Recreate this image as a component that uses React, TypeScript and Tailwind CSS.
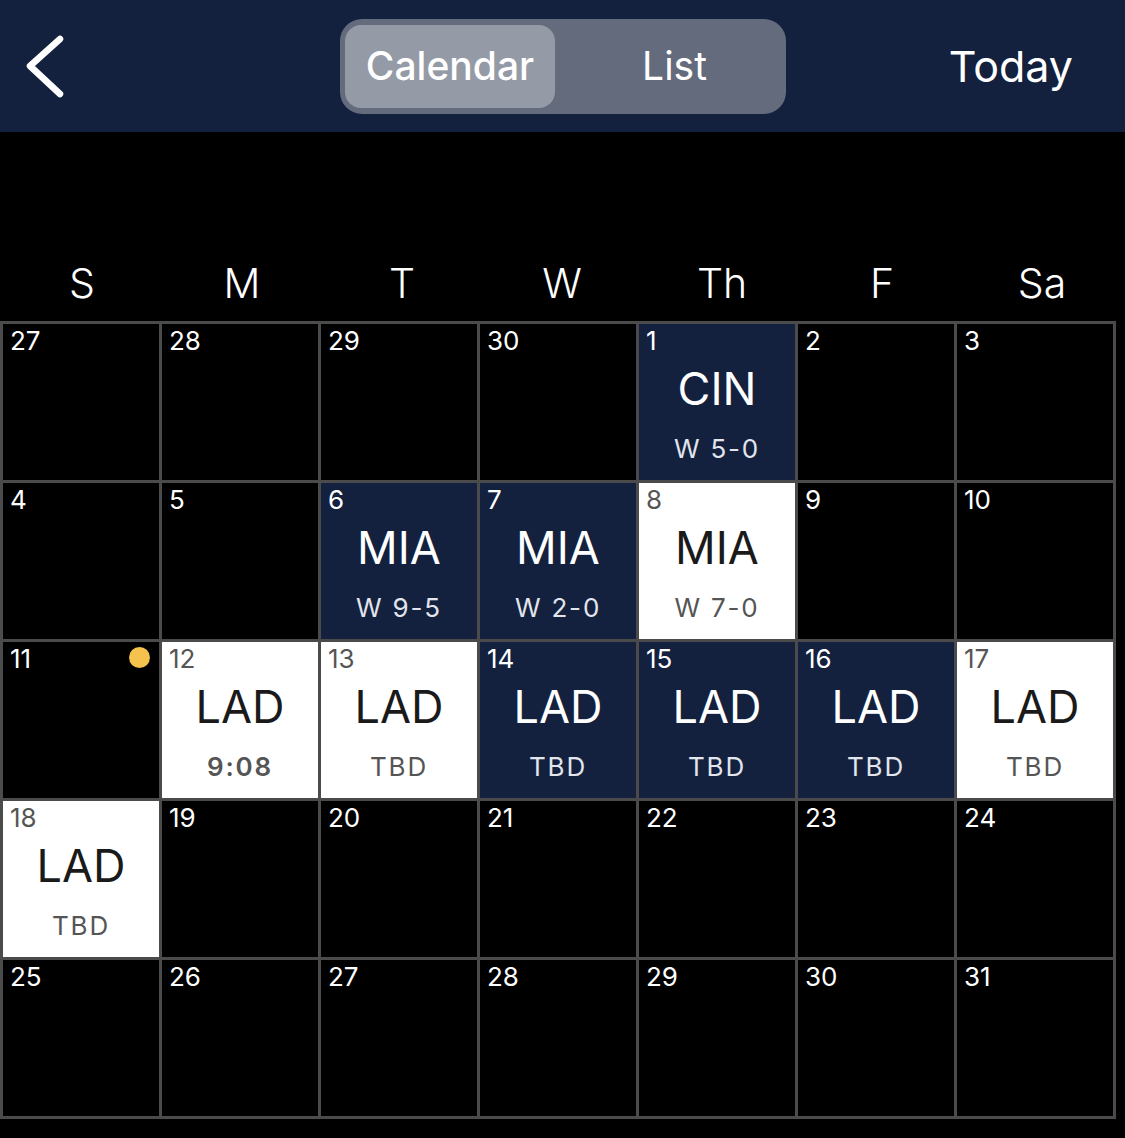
type Cell = {
  day: number;
  kind?: "away" | "home";
  team?: string;
  result?: string;
  strong?: boolean;
  dot?: boolean;
};

const weeks: Cell[][] = [
  [
    { day: 27 },
    { day: 28 },
    { day: 29 },
    { day: 30 },
    { day: 1, kind: "away", team: "CIN", result: "W 5-0" },
    { day: 2 },
    { day: 3 },
  ],
  [
    { day: 4 },
    { day: 5 },
    { day: 6, kind: "away", team: "MIA", result: "W 9-5" },
    { day: 7, kind: "away", team: "MIA", result: "W 2-0" },
    { day: 8, kind: "home", team: "MIA", result: "W 7-0" },
    { day: 9 },
    { day: 10 },
  ],
  [
    { day: 11, dot: true },
    { day: 12, kind: "home", team: "LAD", result: "9:08", strong: true },
    { day: 13, kind: "home", team: "LAD", result: "TBD" },
    { day: 14, kind: "away", team: "LAD", result: "TBD" },
    { day: 15, kind: "away", team: "LAD", result: "TBD" },
    { day: 16, kind: "away", team: "LAD", result: "TBD" },
    { day: 17, kind: "home", team: "LAD", result: "TBD" },
  ],
  [
    { day: 18, kind: "home", team: "LAD", result: "TBD" },
    { day: 19 },
    { day: 20 },
    { day: 21 },
    { day: 22 },
    { day: 23 },
    { day: 24 },
  ],
  [
    { day: 25 },
    { day: 26 },
    { day: 27 },
    { day: 28 },
    { day: 29 },
    { day: 30 },
    { day: 31 },
  ],
];

const days = ["S", "M", "T", "W", "Th", "F", "Sa"];

function DayCell({ cell }: { cell: Cell }) {
  const bg =
    cell.kind === "away"
      ? "bg-[#13213f]"
      : cell.kind === "home"
        ? "bg-white"
        : "bg-black";
  const dayColor = cell.kind === "home" ? "text-[#555555]" : "text-white";

  return (
    <div className={`relative flex h-[156px] flex-col ${bg}`}>
      <div className={`h-[30px] pl-[7px] pt-[4px] text-[26px] leading-[26px] ${dayColor}`}>
        {cell.day}
      </div>

      {cell.dot && (
        <div className="absolute right-[9px] top-[5px] h-[21px] w-[21px] rounded-full bg-[#f4c24d]" />
      )}

      {cell.team && (
        <>
          <div
            className={`mt-[12px] text-center text-[45px] leading-[45px] ${
              cell.kind === "home" ? "text-[#1a1a1a]" : "text-white"
            }`}
          >
            {cell.team}
          </div>
          <div
            className={`mt-[25px] text-center text-[26px] leading-[26px] tracking-[0.07em] ${
              cell.kind === "home" ? "text-[#555555]" : "text-[#e2e5ec]"
            } ${cell.strong ? "font-semibold" : ""}`}
          >
            {cell.result}
          </div>
        </>
      )}
    </div>
  );
}

export default function App() {
  return (
    <div className="min-h-[1138px] bg-black font-['Inter','Noto_Sans',sans-serif] text-white">
      {/* Top bar */}
      <div className="flex h-[132px] items-center bg-[#13213f]">
        <div className="w-[340px] pl-[24px]">
          <svg width="44" height="66" viewBox="0 0 44 66" fill="none">
            <polyline
              points="36,6 6,33 36,61"
              stroke="white"
              strokeWidth="6.5"
              strokeLinecap="round"
              strokeLinejoin="round"
            />
          </svg>
        </div>

        <div className="flex h-[95px] w-[446px] items-center rounded-[22px] bg-[#636b7c] pl-[5px] pr-[6px]">
          <div className="flex h-[83px] w-[210px] items-center justify-center rounded-[16px] bg-[#959aa7] text-[39px] font-medium">
            Calendar
          </div>
          <div className="flex flex-1 items-center justify-center pl-[14px] text-[39px]">
            List
          </div>
        </div>

        <div className="flex flex-1 justify-end pr-[52px] text-[43px]">Today</div>
      </div>

      {/* Weekday labels */}
      <div className="ml-[2px] mt-[120px] grid h-[64px] w-[1120px] grid-cols-7">
        {days.map((d) => (
          <div key={d} className="flex items-center justify-center text-[41px] font-light">
            {d}
          </div>
        ))}
      </div>

      {/* Month grid */}
      <div className="mt-[5px] grid w-[1116px] grid-cols-7 gap-[3px] bg-[#4b4b4b] p-[3px]">
        {weeks.flat().map((cell, i) => (
          <DayCell key={i} cell={cell} />
        ))}
      </div>
    </div>
  );
}
